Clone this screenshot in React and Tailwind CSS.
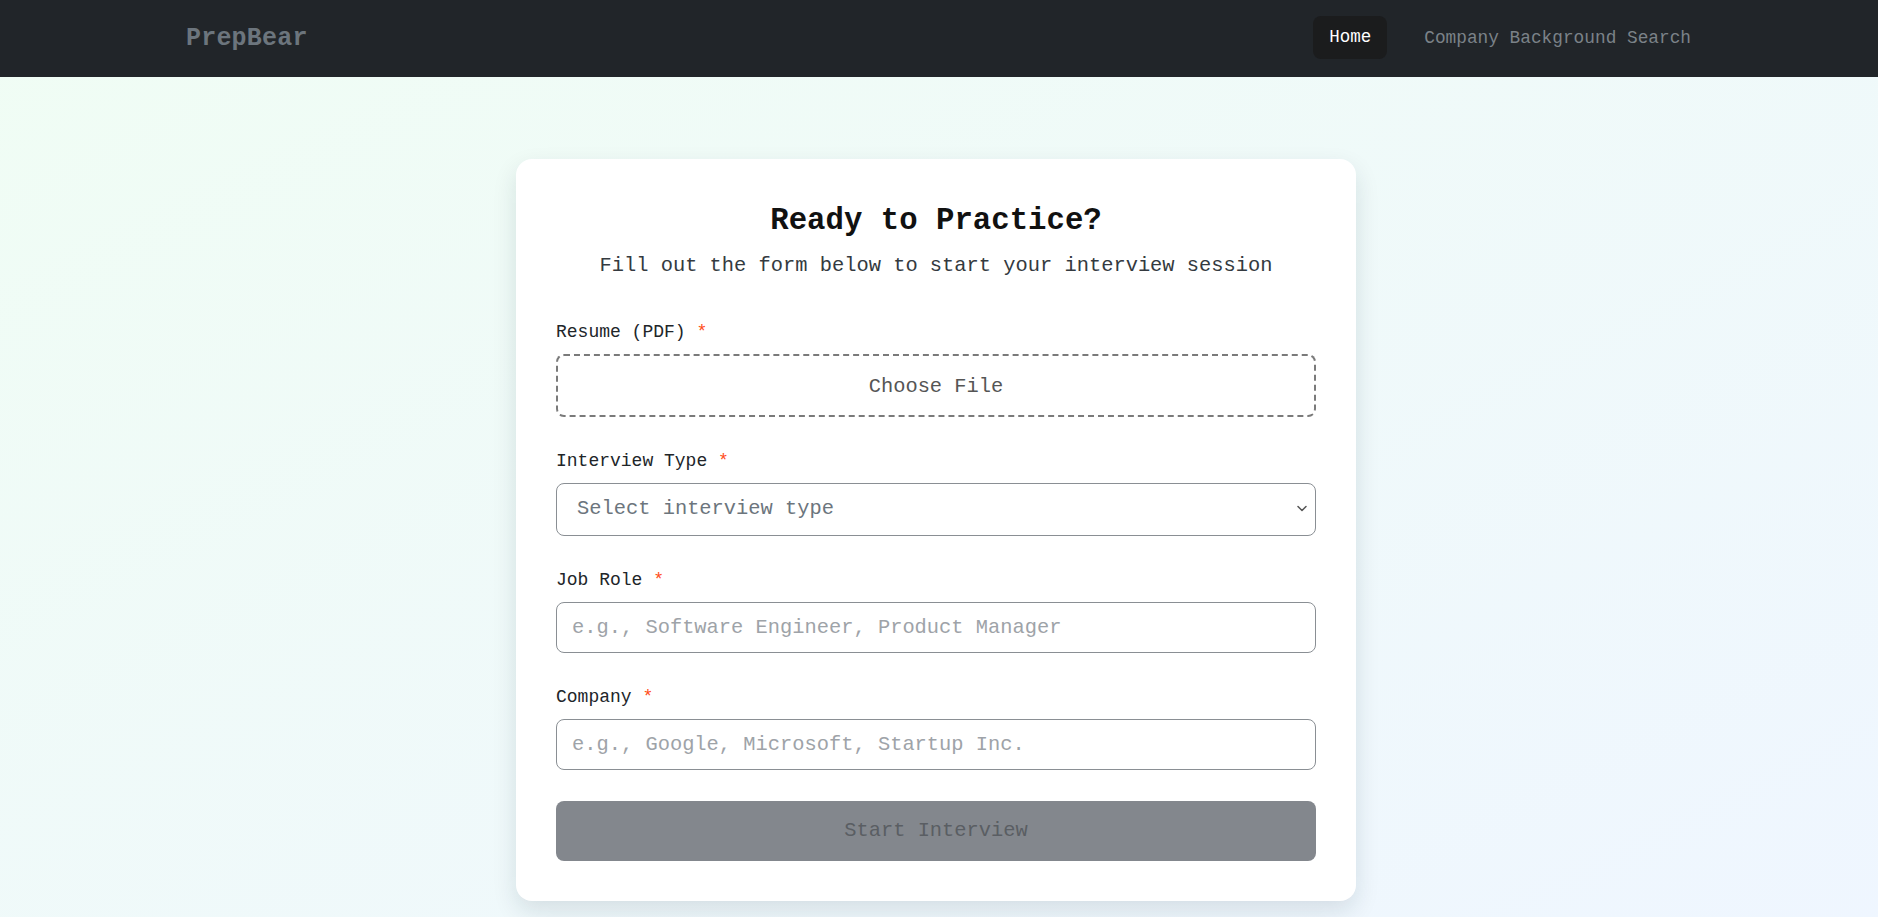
const MONO = { fontFamily: '"Liberation Mono", "DejaVu Sans Mono", monospace' };

function Label({ children }) {
  return (
    <label className="block text-[18px] leading-[26px] text-[#212529] mb-[9px]">
      {children} <span className="text-[#ff4d1a]">*</span>
    </label>
  );
}

export default function App() {
  return (
    <div style={MONO} className="min-h-screen bg-gradient-to-br from-[#f0fdf4] to-[#eff6ff] flex flex-col">
      {/* navbar */}
      <nav className="h-[77px] bg-[#212529] flex items-center justify-between pl-[186px] pr-[171px] pb-[2px]">
        <span className="text-[25px] font-bold text-[#6c757d] tracking-[0.2px] pt-[2px]">PrepBear</span>
        <div className="flex items-center gap-[21px]">
          <a className="h-[43px] px-4 rounded-lg bg-[#1b1c1d] text-white text-[17.5px] flex items-center">Home</a>
          <a className="px-4 text-[17.8px] text-[#7b8288] pt-[1px]">Company Background Search</a>
        </div>
      </nav>

      {/* form card */}
      <main className="flex-1 pt-[82px] pb-10 pr-[6px]">
        <div className="w-[840px] mx-auto bg-white rounded-2xl shadow-[0_10px_25px_rgba(15,40,60,0.12)] p-10">
          <h1 className="text-center text-[30.7px] leading-[38px] font-bold text-[#111] mt-[3px] mb-[11px]">Ready to Practice?</h1>
          <p className="text-center text-[20.4px] leading-[30px] text-[#343a40] mb-[38px]">
            Fill out the form below to start your interview session
          </p>

          <div className="mb-[31px]">
            <Label>Resume (PDF)</Label>
            <div className="h-[63px] border-2 border-dashed border-[#7a7a7a] rounded-lg flex items-center justify-center text-[20.4px] text-[#555] pt-[3px]">
              Choose File
            </div>
          </div>

          <div className="mb-[31px]">
            <Label>Interview Type</Label>
            <div className="relative">
              <select
                defaultValue=""
                style={MONO}
                className="appearance-none w-full h-[53px] border border-[#8a8f94] rounded-lg bg-white pl-5 text-[20.4px] text-[#6c757d] outline-none"
              >
                <option value="" disabled>Select interview type</option>
                <option>Behavioral</option>
                <option>Technical</option>
              </select>
              <svg className="absolute right-[9px] top-[22px] pointer-events-none" width="10" height="7" viewBox="0 0 10 7" fill="none">
                <path d="M1 1.5l4 4 4-4" stroke="#555" strokeWidth="1.5" strokeLinecap="round" strokeLinejoin="round" />
              </svg>
            </div>
          </div>

          <div className="mb-[31px]">
            <Label>Job Role</Label>
            <input
              style={MONO}
              placeholder="e.g., Software Engineer, Product Manager"
              className="w-full h-[51px] border border-[#8a8f94] rounded-lg pl-[15px] text-[20.4px] text-[#212529] placeholder:text-[#9ea3a8] outline-none"
            />
          </div>

          <div className="mb-[31px]">
            <Label>Company</Label>
            <input
              style={MONO}
              placeholder="e.g., Google, Microsoft, Startup Inc."
              className="w-full h-[51px] border border-[#8a8f94] rounded-lg pl-[15px] text-[20.4px] text-[#212529] placeholder:text-[#9ea3a8] outline-none"
            />
          </div>

          <button
            disabled
            style={MONO}
            className="w-full h-[60px] rounded-lg bg-[#83878d] text-[20.4px] text-[#5a5e63]"
          >
            Start Interview
          </button>
        </div>
      </main>
    </div>
  );
}
